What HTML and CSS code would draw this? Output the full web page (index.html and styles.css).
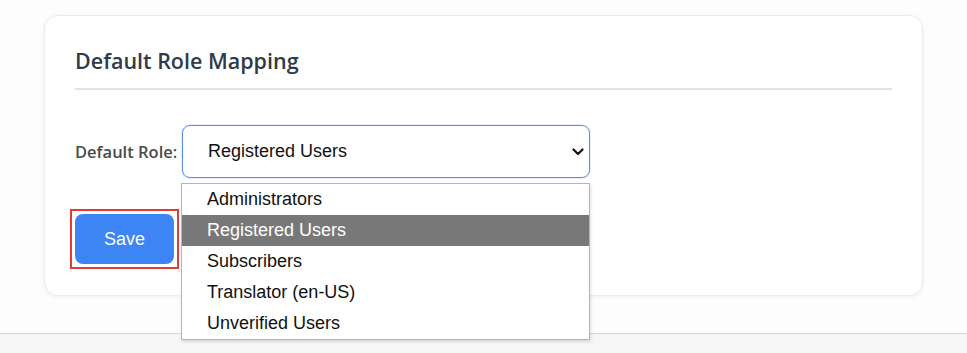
FILE: index.html
```html
<!DOCTYPE html>
<html lang="en">
  <head>
    <meta charset="UTF-8" />
    <meta name="viewport" content="width=device-width, initial-scale=1.0" />
    <title>Default Role Mapping</title>
    <link rel="stylesheet" href="styles.css">
  </head>
  <body>
    <div class="page">
      <div class="card">
        <h2 class="title">Default Role Mapping</h2>

        <div class="role-row">
          <label class="role-label">Default Role:</label>
          <div class="select-wrap">
            <div class="select">
              <span>Registered Users</span>
              <svg class="chevron" width="12" height="8" viewBox="0 0 12 8">
                <path d="M1.5 1.5 L6 6 L10.5 1.5" fill="none" stroke="#111" stroke-width="2.2" stroke-linecap="round" stroke-linejoin="round" />
              </svg>
            </div>
            <ul class="options">
              <li>Administrators</li>
              <li class="active">Registered Users</li>
              <li>Subscribers</li>
              <li>Translator (en-US)</li>
              <li>Unverified Users</li>
            </ul>
          </div>
        </div>

        <div class="actions">
          <div class="focus-ring">
            <button class="btn-save">Save</button>
          </div>
        </div>
      </div>
    </div>
    <div class="footer"></div>
  </body>
</html>
```

FILE: styles.css
```css
body {
  margin: 0;
  background: #fdfdfd;
  font-family: "Open Sans", "Noto Sans", sans-serif;
  height: 353px;
  overflow: hidden;
}

.page {
  padding: 15px 0 0 44px;
  height: 333px;
  box-sizing: border-box;
}

.card {
  width: 879px;
  height: 281px;
  box-sizing: border-box;
  background: white;
  border: 1px solid #ececec;
  border-radius: 14px;
  box-shadow: rgba(0, 0, 0, 0.06) 0px 1px 4px;
  padding: 31px 30px 0 30px;
}

.title {
  margin: 0;
  font-size: 21.5px;
  font-weight: 600;
  color: #2f3b49;
  line-height: 28px;
  padding-bottom: 13px;
  border-bottom: 2px solid #e3e3e3;
}

.role-row {
  display: flex;
  align-items: center;
  gap: 5px;
  margin-top: 35px;
}

.role-label {
  width: 102px;
  font-size: 16.5px;
  font-weight: 600;
  color: #4a4a4a;
  white-space: nowrap;
}

.select-wrap {
  position: relative;
}

.select {
  width: 408px;
  height: 53px;
  box-sizing: border-box;
  border: 1px solid #5a8fd9;
  border-radius: 8px;
  box-shadow: 0 0 0 1px rgba(90, 143, 217, 0.15);
  display: flex;
  align-items: center;
  justify-content: space-between;
  padding: 0 5px 0 25px;
  font-family: "Liberation Sans", Arial, sans-serif;
  font-size: 18px;
  color: #111;
}

.options {
  position: absolute;
  top: 58px;
  left: -1px;
  width: 409px;
  margin: 0;
  padding: 0;
  list-style: none;
  box-sizing: border-box;
  background: white;
  border: 1px solid #b5b5b5;
  box-shadow: rgba(0, 0, 0, 0.12) 1px 2px 3px;
  font-family: "Liberation Sans", Arial, sans-serif;
  font-size: 18px;
  color: #111;
}

.options li {
  height: 31px;
  line-height: 31px;
  padding-left: 25px;
}

.options .active {
  background: #787878;
  color: white;
}

.actions {
  margin-top: 31px;
  margin-left: -5px;
}

.focus-ring {
  display: inline-block;
  border: 2px solid #e53935;
  padding: 3px;
}

.btn-save {
  display: block;
  width: 99px;
  height: 50px;
  border: none;
  border-radius: 8px;
  background-color: #3d84f5;
  color: white;
  font-family: "Liberation Sans", Arial, sans-serif;
  font-size: 18px;
}

.footer {
  border-top: 1px solid #d6d6d6;
  background: #f6f6f6;
  height: 19px;
}
```
